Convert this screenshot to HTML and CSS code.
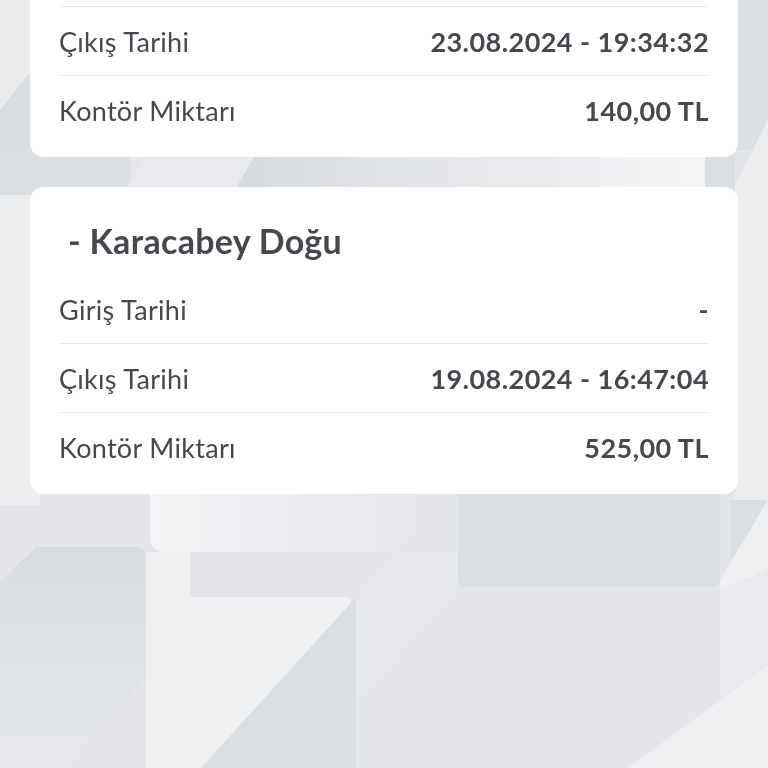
FILE: index.html
```html
<!DOCTYPE html>
<html>
<head>
    <title>Kontör Hareketleri</title>
    <link rel="stylesheet" href="styles.css">
</head>
<body>
    <svg class="backdrop" width="768" height="768" viewBox="0 0 768 768" xmlns="http://www.w3.org/2000/svg">
        <defs>
            <linearGradient id="fadeRight" x1="0" y1="0" x2="1" y2="0">
                <stop offset="0" stop-color="#d7dadd"/>
                <stop offset="1" stop-color="#f4f5f7"/>
            </linearGradient>
            <linearGradient id="fadeLeft" x1="0" y1="0" x2="1" y2="0">
                <stop offset="0" stop-color="#f3f4f6"/>
                <stop offset="1" stop-color="#e2e4e7"/>
            </linearGradient>
            <linearGradient id="darkDown" x1="0" y1="0" x2="0" y2="1">
                <stop offset="0" stop-color="#d9dcdf"/>
                <stop offset="1" stop-color="#e6e8eb"/>
            </linearGradient>
        </defs>
        <rect width="768" height="768" fill="#e4e6e9"/>
        <!-- left strip -->
        <polygon points="0,0 40,0 40,60 0,110" fill="#eaecee"/>
        <polygon points="0,110 40,60 40,195 0,195" fill="#dadde0"/>
        <rect x="0" y="195" width="40" height="310" fill="#eceef0"/>
        <!-- band between cards -->
        <rect x="0" y="150" width="130" height="45" fill="#dcdfe2"/>
        <polygon points="148,150 258,150 232,195 122,195" fill="#e8eaed"/>
        <polygon points="258,150 705,150 705,195 232,195" fill="url(#fadeRight)"/>
        <rect x="705" y="150" width="30" height="45" fill="#dcdfe2"/>
        <!-- right strip -->
        <rect x="730" y="0" width="38" height="150" fill="#dcdfe2"/>
        <polygon points="768,120 735,185 735,500 768,500" fill="#eceef0"/>
        <rect x="730" y="500" width="38" height="90" fill="#dcdfe2"/>
        <!-- lower shapes -->
        <path d="M150 480 H460 L398 552 H166 Q150 552 150 536 Z" fill="url(#fadeLeft)"/>
        <rect x="458" y="480" width="262" height="107" rx="6" fill="#dcdfe2"/>
        <path d="M36 547 H138 Q146 547 146 556 V677 L64 768 H0 V582 Z" fill="url(#darkDown)"/>
        <rect x="146" y="552" width="44" height="216" fill="#eef0f2"/>
        <path d="M190 597 H346 Q354 597 350 604 L201 768 H190 Z" fill="#eff1f3"/>
        <polygon points="350,604 356,597 356,768 201,768" fill="#dcdfe2"/>
        <polygon points="398,552 458,552 458,587 356,700 356,600" fill="#e6e8eb"/>
        <polygon points="768,500 768,570 720,590 720,580" fill="#eef0f2"/>
        <polygon points="720,590 768,570 768,665 720,700" fill="#e8eaed"/>
        <polygon points="768,665 768,768 628,768" fill="#eef0f2"/>
    </svg>

    <div class="list">
        <div class="card">
            <h2 class="station">- Karacabey Batı</h2>
            <div class="row">
                <span class="label">Giriş Tarihi</span>
                <span class="value">23.08.2024 - 18:02:11</span>
            </div>
            <div class="row">
                <span class="label">Çıkış Tarihi</span>
                <span class="value">23.08.2024 - 19:34:32</span>
            </div>
            <div class="row">
                <span class="label">Kontör Miktarı</span>
                <span class="value">140,00 TL</span>
            </div>
        </div>

        <div class="card">
            <h2 class="station">- Karacabey Doğu</h2>
            <div class="row">
                <span class="label">Giriş Tarihi</span>
                <span class="value">-</span>
            </div>
            <div class="row">
                <span class="label">Çıkış Tarihi</span>
                <span class="value">19.08.2024 - 16:47:04</span>
            </div>
            <div class="row">
                <span class="label">Kontör Miktarı</span>
                <span class="value">525,00 TL</span>
            </div>
        </div>
    </div>
</body>
</html>
```

FILE: styles.css
```css
body {
    font-family: Lato, "Noto Sans", sans-serif;
    background-color: #e4e6e9;
    color: #45494e;
    margin: 0;
    padding: 0;
    overflow: hidden;
}

.backdrop {
    position: fixed;
    top: 0;
    left: 0;
    z-index: -1;
}

/* list is scrolled so the first card is cut off at the top */
.list {
    margin-top: -150px;
    padding: 0 30px;
    display: flex;
    flex-direction: column;
    gap: 30px;
}

.card {
    background-color: #fff;
    border-radius: 14px;
    padding: 36px 29px 13px;
}

.station {
    margin: 0 0 16px 9px;
    font-size: 34px;
    line-height: 36px;
    font-weight: 700;
    letter-spacing: 0.3px;
    color: #45494e;
}

.row {
    display: flex;
    justify-content: space-between;
    align-items: center;
    height: 68px;
    font-size: 27px;
}

.row + .row {
    border-top: 1px solid #e6e7e9;
}

.label {
    font-weight: 400;
    letter-spacing: 0.3px;
}

.value {
    font-weight: 700;
    letter-spacing: 0.45px;
}
```
